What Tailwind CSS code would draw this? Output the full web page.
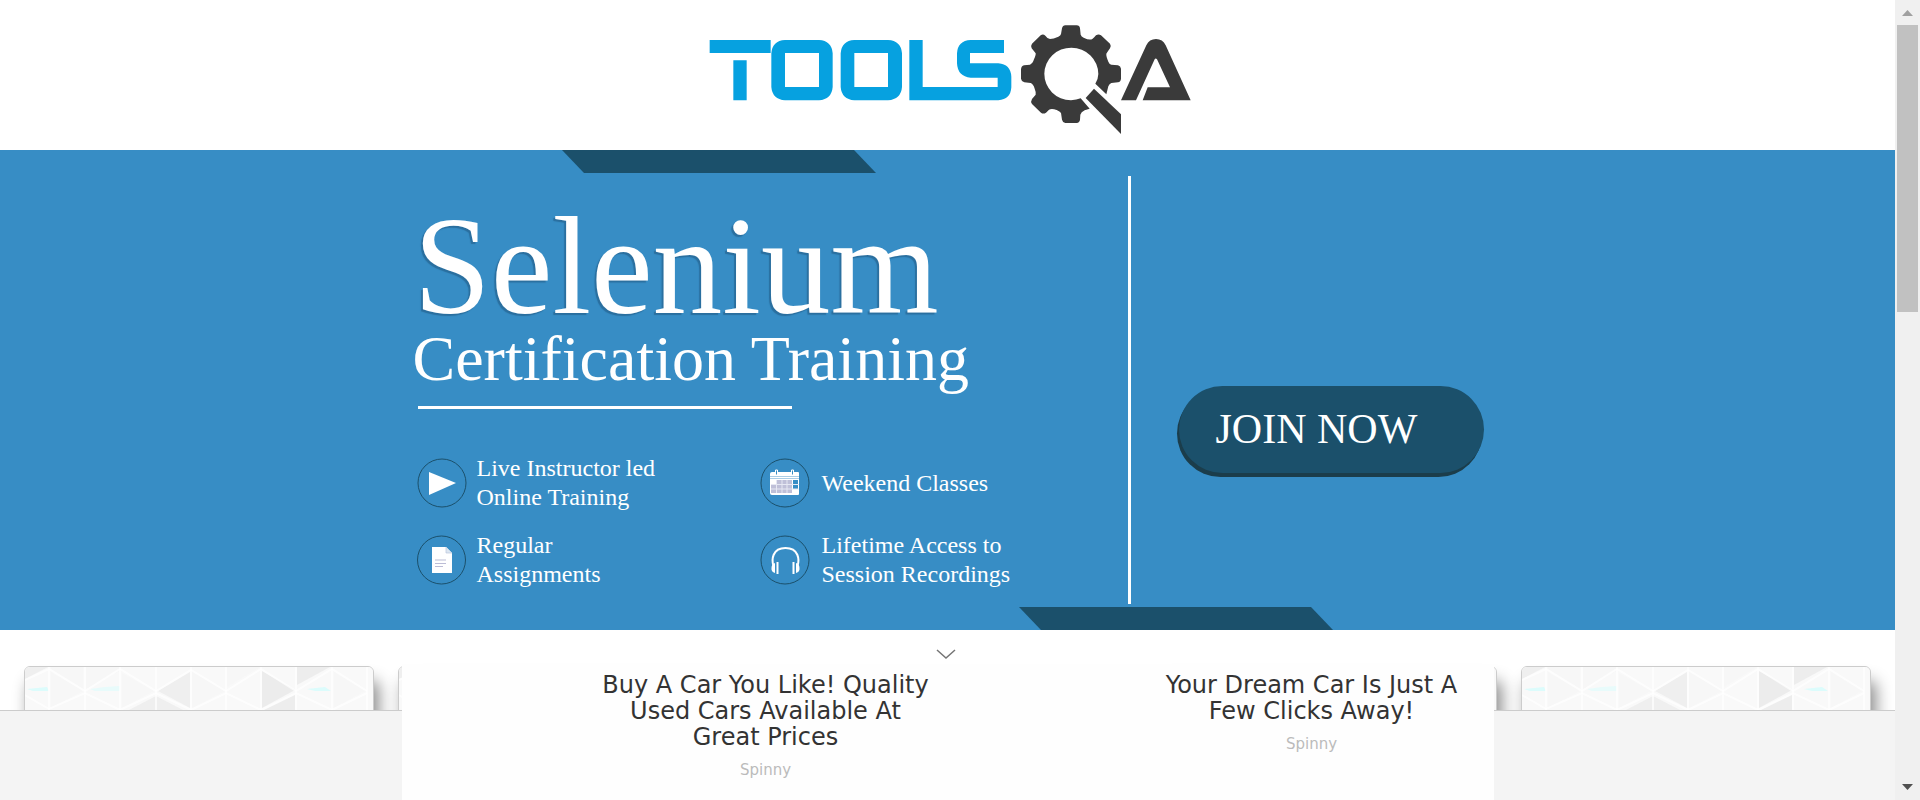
<!DOCTYPE html>
<html lang="en">
<head>
<meta charset="utf-8">
<title>ToolsQA – Selenium Certification Training</title>
<script src="https://cdn.jsdelivr.net/npm/@tailwindcss/browser@4"></script>
</head>
<body class="flex h-screen overflow-hidden bg-white font-['Liberation_Serif',serif]">

<!-- Card background pattern -->
<svg class="hidden">
  <symbol id="hex" viewBox="0 0 348 44" preserveAspectRatio="none">
    <rect width="348" height="44" fill="#f9f9f9"/>
    <g fill="#efefef">
      <path d="M0 0H23L0 12Z"/>
      <path d="M133 24L165 5V41Z"/>
      <path d="M237 4V41L270 23Z" fill="#ececec"/>
      <path d="M237 44L270 28V44Z" fill="#ededed"/>
      <path d="M272 0H305L272 18Z" fill="#ededed"/>
      <path d="M102 44L131 29L160 44Z"/>
      <path d="M61 0H95V4L61 22ZM26 0H58V22L26 4ZM167 4V41L200 24ZM26 5V41L58 24Z" fill="#f7f7f7"/>
      <path d="M309 5V41L340 24ZM202 0H235L202 20ZM97 6V41L129 24Z" fill="#f7f7f7"/>
    </g>
    <g fill="#dcfcfc">
      <path d="M2 22L22 20L24 24H8Z"/>
      <path d="M65 22L80 20L95 19V24H70Z" fill="#e8fbfb"/>
      <path d="M282 22L300 20L306 24H290Z"/>
    </g>
    <g fill="none" stroke="#fff" stroke-width="2" stroke-opacity=".7">
      <path d="M24 0V44M60 0V44M95 0V44M131 0V44M166 0V44M201 0V44M236 0V44M271 0V44M307 0V44M342 0V44"/>
      <path d="M0 13L24 2L60 24L95 2L131 24L166 3L201 24L236 2L271 24L307 2L342 24"/>
      <path d="M0 28L24 42L60 26L95 43L131 26L166 43L201 26L236 43L271 26L307 43L342 26"/>
    </g>
  </symbol>
</svg>

<div class="relative flex min-w-0 flex-1 flex-col overflow-hidden">

  <header class="flex h-[150px] shrink-0 justify-center pt-[10px]">
    <a href="#" aria-label="ToolsQA home" class="block">
      <svg width="500" height="140" viewBox="24 0 1500 420" aria-hidden="true">
        <g fill="#06a1e0">
          <path d="M59 90H242V129H59ZM130 151H170V271H130Z"/>
          <path fill-rule="evenodd" d="M285 90H387Q425 92 428 130V231Q425 268 387 271H285Q247 268 244 231V130Q247 92 285 90ZM285 129V231H387V129Z"/>
          <path fill-rule="evenodd" d="M493 90H594Q633 92 636 130V231Q633 268 594 271H493Q455 268 452 231V130Q455 92 493 90ZM493 129V231H594V129Z"/>
          <path d="M658 90H698V231H923V203H842Q803 200 801 160V130Q803 92 842 90H942V129H840V160H925Q962 163 964 200V232Q962 268 925 271H658Z"/>
        </g>
        <g fill="#3a3a3a">
          <path d="M1116 55Q1118 46 1126 46H1160Q1169 46 1170 55L1172 74Q1174 80 1181 83Q1199 92 1207 87Q1213 82 1218 76Q1226 71 1233 76L1260 101Q1265 109 1260 115Q1253 125 1249 131Q1248 138 1255 155Q1258 163 1264 164L1284 166Q1292 168 1293 176V206Q1292 216 1284 217L1264 219Q1258 222 1255 229L1249 253L1216 221Q1225 205 1225 192A81 79 0 1 0 1143 271Q1160 270 1172 265L1199 296L1184 301Q1173 306 1171 314L1170 329Q1169 338 1160 339H1126Q1118 338 1116 329L1113 309Q1110 304 1100 300Q1085 294 1077 299L1068 308Q1060 313 1053 308L1026 282Q1021 275 1026 267L1037 254Q1039 248 1034 236Q1030 222 1022 219L1003 217Q994 214 993 206V178Q994 168 1002 166L1020 164Q1028 161 1032 148Q1038 135 1037 130L1025 115Q1021 108 1026 101L1052 76Q1059 71 1066 77Q1073 87 1080 87Q1090 87 1105 80Q1112 77 1113 72Z"/>
          <path d="M1212 236L1293 313V372L1187 264Z"/>
          <path d="M1293 271L1369 106Q1378 87 1398 87Q1418 87 1427 106L1502 271H1358L1373 232H1440L1401 148Q1397 143 1394 148L1338 271Z"/>
        </g>
      </svg>
    </a>
  </header>

  <section class="shrink-0 bg-[#378dc5] text-white">
    <div class="mx-auto flex max-w-[1072px] flex-col">
      <svg class="ml-[150px] h-[23px] w-[314px]" viewBox="0 0 314 23" aria-hidden="true"><path d="M0 0H292L314 23H22Z" fill="#1b506b"/></svg>

      <div class="flex h-[434px]">
        <div class="w-[716px] shrink-0 pt-8">
          <h1>
            <span class="ml-[2px] block text-[139px] leading-[122px] [text-shadow:-2px_2px_1px_#2a6f9f]">Selenium</span>
            <span class="ml-[1px] block text-[64px] leading-[64px]">Certification Training</span>
          </h1>
          <div class="mt-[15px] ml-[6px] h-[3px] w-[374px] bg-white"></div>
          <ul class="mt-[45px] ml-[5px] grid grid-cols-[343px_1fr] gap-y-[19px] text-2xl leading-[29px]">
            <li class="flex h-[58px] items-center gap-[10px]">
              <svg width="50" height="50" viewBox="0 0 50 50" aria-hidden="true"><circle cx="25" cy="25" r="24" fill="none" stroke="#1b506b"/><path d="M12 14L39 25L12 37Z" fill="#fff"/></svg>
              <span>Live Instructor led<br>Online Training</span>
            </li>
            <li class="flex h-[58px] items-center gap-3">
              <svg width="50" height="50" viewBox="0 0 50 50" aria-hidden="true"><circle cx="25" cy="25" r="24" fill="none" stroke="#1b506b"/>
                <path d="M12 14H38Q39 14 39 15V36Q39 37 38 37H12Q10 37 10 35V16Q10 14 12 14Z" fill="#fff"/>
                <path d="M10 18.500H39M10 20.500H39" stroke="#a9cde6"/>
                <path d="M15.500 12H17.500V17H15.500ZM31.500 12H33.500V17H31.500Z" fill="#378dc5" stroke="#fff"/>
                <path d="M17 22H32V35H17ZM11 27H16V35H11Z" fill="#bfc0d8"/>
                <path d="M33 22H38V31H33Z" fill="#378dc5"/>
                <path d="M11 26.500H39M11 31H39M22 22V35M27 22V35M16.500 22V35" stroke="#e6e8f3"/>
              </svg>
              <span>Weekend Classes</span>
            </li>
            <li class="flex h-[58px] items-center gap-[10px]">
              <svg width="50" height="50" viewBox="0 0 50 50" aria-hidden="true"><circle cx="24.500" cy="25" r="24" fill="none" stroke="#1b506b"/>
                <path d="M15 12H29L35 18V38H15Z" fill="#fff"/><path d="M29 12V18H35" fill="#dde6f1" stroke="#b9c6dc" stroke-width=".7"/>
                <path d="M18 25H29M18 28.500H29M18 31.500H26" stroke="#bcbdd6" stroke-width="1.200"/>
              </svg>
              <span>Regular<br>Assignments</span>
            </li>
            <li class="flex h-[58px] items-center gap-3">
              <svg width="50" height="50" viewBox="0 0 50 50" aria-hidden="true"><circle cx="25" cy="25" r="24" fill="none" stroke="#1b506b"/>
                <path d="M13.500 31C11.500 25 12 13 25.500 13C39 13 39.500 25 37.500 31" fill="none" stroke="#fff" stroke-width="2"/>
                <path d="M15 28V38Q11 37 11.500 33Q11.500 29 15 28ZM36 28V38Q40 37 39.500 33Q39.500 29 36 28ZM16.500 27H18.500V39H16.500ZM32.500 27H34.500V39H32.500Z" fill="#fff"/>
              </svg>
              <span>Lifetime Access to<br>Session Recordings</span>
            </li>
          </ul>
        </div>
        <div class="my-[3px] w-[3px] shrink-0 bg-white"></div>
        <div class="flex-1 pt-[213px] pl-12">
          <button type="button" class="h-[87px] w-full cursor-pointer rounded-full bg-[#1b506b] pl-[37px] text-left text-[42px] shadow-[-2px_4px_0_#1b3d4b]">JOIN NOW</button>
        </div>
      </div>

      <svg class="ml-[607px] h-[23px] w-[314px]" viewBox="0 0 314 23" aria-hidden="true"><path d="M0 0H292L314 23H22Z" fill="#1b506b"/></svg>
    </div>
  </section>

  <section class="flex justify-between px-6 pt-9">
    <article class="h-[170px] w-[350px] shrink-0 overflow-hidden rounded-md border border-[#ccc] bg-[#f9f9f9] shadow-[5px_15px_16px_rgb(0_0_0/0.45)]"><svg class="h-11 w-full"><use href="#hex"/></svg></article>
    <article class="h-[170px] w-[350px] shrink-0 overflow-hidden rounded-md border border-[#ccc] bg-[#f9f9f9] shadow-[5px_15px_16px_rgb(0_0_0/0.45)]"><svg class="h-11 w-full"><use href="#hex"/></svg></article>
    <article class="h-[170px] w-[350px] shrink-0 overflow-hidden rounded-md border border-[#ccc] bg-[#f9f9f9]"></article>
    <article class="h-[170px] w-[350px] shrink-0 overflow-hidden rounded-md border border-[#ccc] bg-[#f9f9f9] shadow-[5px_15px_16px_rgb(0_0_0/0.45)]"><svg class="h-11 w-full"><use href="#hex"/></svg></article>
    <article class="h-[170px] w-[350px] shrink-0 overflow-hidden rounded-md border border-[#ccc] bg-[#f9f9f9] shadow-[5px_15px_16px_rgb(0_0_0/0.45)]"><svg class="h-11 w-full"><use href="#hex"/></svg></article>
  </section>

  <!-- Sticky footer strip and ad panel over the cards -->
  <div class="absolute inset-x-0 bottom-0 h-[90px] border-t border-[#ccc] bg-[#f4f4f4]"></div>
  <aside class="absolute inset-x-0 bottom-0 mx-auto flex max-w-[1092px] flex-col items-center font-['DejaVu_Sans',Verdana,sans-serif]" aria-label="Advertisement">
    <button type="button" aria-label="Close advertisement" class="mr-1 flex h-5 w-10 cursor-pointer items-center justify-center">
      <svg width="20" height="10" viewBox="0 0 20 10" fill="none" stroke="#757575" stroke-width="1.500"><path d="M1 1L10 9L19 1"/></svg>
    </button>
    <div class="grid h-[136px] w-full grid-cols-2 bg-[#fefefe] pt-2 text-center">
      <a href="#" class="flex flex-col items-center pl-[182px]">
        <span class="w-[336px] text-2xl leading-[26px] text-[#333]">Buy A Car You Like! Quality Used Cars Available At Great Prices</span>
        <span class="mt-[10px] text-[15px] leading-5 text-[#bbb]">Spinny</span>
      </a>
      <a href="#" class="flex flex-col items-center pl-[182px]">
        <span class="w-[336px] text-2xl leading-[26px] text-[#333]">Your Dream Car Is Just A Few Clicks Away!</span>
        <span class="mt-[10px] text-[15px] leading-5 text-[#bbb]">Spinny</span>
      </a>
    </div>
  </aside>
</div>

<!-- Scrollbar -->
<div class="flex w-[25px] shrink-0 flex-col items-center bg-[#f0f0f0]" aria-hidden="true">
  <svg class="h-[25px] w-[25px] shrink-0" viewBox="0 0 25 25"><path d="M7 16L12.500 10L18 16Z" fill="#a0a0a0"/></svg>
  <div class="h-[287px] w-[21px] bg-[#c1c1c1]"></div>
  <svg class="mt-auto h-[25px] w-[25px] shrink-0" viewBox="0 0 25 25"><path d="M7 9L12.500 15L18 9Z" fill="#505050"/></svg>
</div>
</body>
</html>
